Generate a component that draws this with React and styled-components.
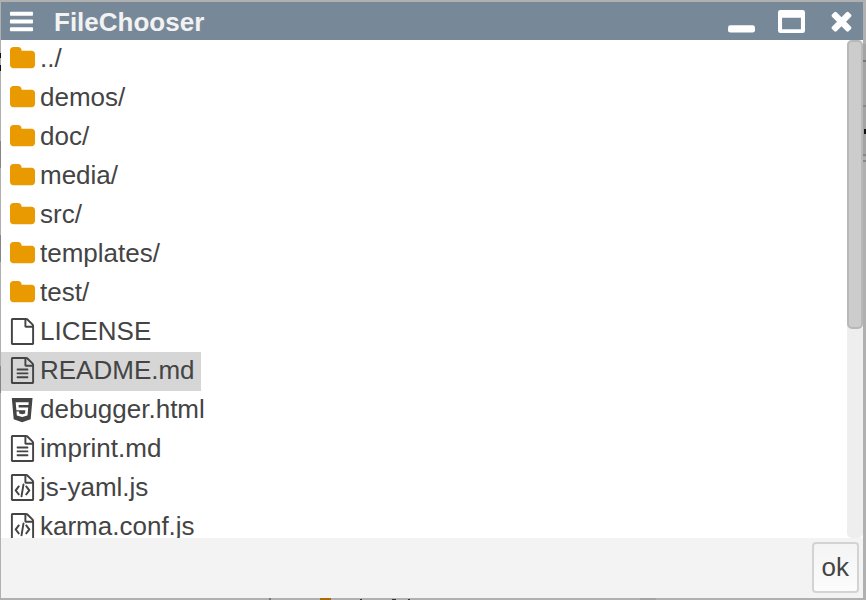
import React, { useState } from "react";
import styled, { createGlobalStyle } from "styled-components";

const GlobalStyle = createGlobalStyle`
  * { box-sizing: border-box; }
  html, body, #root { height: 100%; }
  body {
    margin: 0;
    overflow: hidden;
    background: #b0b0b0;
    color: #444;
    font-family: "Liberation Sans", Arial, Helvetica, sans-serif;
  }
  button { font-family: inherit; color: inherit; cursor: pointer; }
`;

const Desktop = styled.div`
  position: relative;
  height: 100vh;
  padding: 2px 3px 2px 1px;
`;

const Trace = styled.span`
  position: absolute;
  left: ${(p) => p.$left};
  top: ${(p) => p.$top};
  width: ${(p) => p.$w}px;
  height: ${(p) => p.$h}px;
  background: ${(p) => p.$color};
`;

const Window = styled.section`
  position: relative;
  display: flex;
  flex-direction: column;
  height: 100%;
  background: #fff;
`;

const TitleBar = styled.header`
  display: flex;
  align-items: center;
  flex: none;
  height: 38px;
  padding: 0 8px 0 7px;
  background: #789;
  color: #fff;
`;

const Title = styled.h1`
  flex: 1;
  margin: 0 0 0 19px;
  padding-top: 2px;
  color: #f2f2f2;
  font-size: 26px;
  line-height: 36px;
`;

const TitleButton = styled.button`
  display: flex;
  padding: 0;
  border: 0;
  background: none;
  color: inherit;
`;

const WindowControls = styled.div`
  display: flex;
  gap: 23px;
`;

const Glyph = styled.svg`
  display: block;
  flex: none;
  width: 27px;
  height: 27px;
  fill: currentColor;
`;

const Body = styled.div`
  display: flex;
  flex: 1;
  min-height: 0;
`;

const FileList = styled.ul`
  flex: 1;
  margin: 0;
  padding: 0;
  overflow-y: auto;
  list-style: none;
  scrollbar-width: none;
`;

const FileButton = styled.button`
  display: flex;
  align-items: center;
  gap: 4px;
  height: 39px;
  padding: 0 6px 2px 8px;
  border: 0;
  background: ${(p) => (p.$selected ? "#d6d6d6" : "transparent")};
  font-size: 26px;
  line-height: 37px;
  white-space: nowrap;
`;

const FileGlyph = styled(Glyph)`
  color: ${(p) => (p.$folder ? "#e99a00" : "#444")};
`;

const ScrollTrack = styled.div`
  flex: none;
  width: 16px;
  border-radius: 5px;
  background: #eee;
`;

const ScrollThumb = styled.div`
  height: 58%;
  border: 2px solid #b8b8b8;
  border-radius: 5px;
  background: #ccc;
`;

const Footer = styled.footer`
  display: flex;
  justify-content: flex-end;
  flex: none;
  padding: 4px 4px 5px;
  background: #f3f3f3;
`;

const OkButton = styled.button`
  height: 51px;
  padding: 0 8px;
  border: 2px solid #d3d3d3;
  border-radius: 4px;
  background: linear-gradient(#f4f4f4, #fcfcfc);
  font-size: 26px;
`;

const sheet =
  "M1596 380q28 28 48 76t20 88v1152q0 40-28 68t-68 28h-1344q-40 0-68-28t-28-68v-1600q0-40 28-68t68-28h896q40 0 88 20t76 48zM1152 136v376h376q-10-29-22-41l-313-313q-12-12-41-22zM1536 1664v-1024h-416q-40 0-68-28t-28-68v-416h-768v1536h1280z";

const paths = {
  folder:
    "M1728 608v704q0 92-66 158t-158 66h-1216q-92 0-158-66t-66-158v-960q0-92 66-158t158-66h320q92 0 158 66t66 158v32h672q92 0 158 66t66 158z",
  file: sheet,
  text:
    sheet +
    "M512 800q0-14 9-23t23-9h704q14 0 23 9t9 23v64q0 14-9 23t-23 9h-704q-14 0-23-9t-9-23zM1248 1024q14 0 23 9t9 23v64q0 14-9 23t-23 9h-704q-14 0-23-9t-9-23v-64q0-14 9-23t23-9zM1248 1280q14 0 23 9t9 23v64q0 14-9 23t-23 9h-704q-14 0-23-9t-9-23v-64q0-14 9-23t23-9z",
  code:
    sheet +
    "M608 768q8-11 21-12.5t24 6.5l51 38q11 8 12.5 21t-6.5 24l-182 243 182 243q8 11 6.5 24t-12.5 21l-51 38q-11 8-24 6.5t-21-12.5l-226-301q-14-19 0-38zM1410 1069q14 19 0 38l-226 301q-8 11-21 12.5t-24-6.5l-51-38q-11-8-12.5-21t6.5-24l182-243-182-243q-8-11-6.5-24t12.5-21l51-38q11-8 24-6.5t21 12.5zM790 1530q-13-2-20.5-13t-5.5-24l138-831q2-13 13-20.5t24-5.5l63 10q13 2 20.5 13t5.5 24l-138 831q-2 13-13 20.5t-24 5.5z",
  bars:
    "M192 256h1408q64 0 64 64v128q0 64-64 64h-1408q-64 0-64-64v-128q0-64 64-64zM192 768h1408q64 0 64 64v128q0 64-64 64h-1408q-64 0-64-64v-128q0-64 64-64zM192 1280h1408q64 0 64 64v128q0 64-64 64h-1408q-64 0-64-64v-128q0-64 64-64z",
  close:
    "M1490 1322q0 40-28 68l-136 136q-28 28-68 28t-68-28l-294-294-294 294q-28 28-68 28t-68-28l-136-136q-28-28-28-68t28-68l294-294-294-294q-28-28-28-68t28-68l136-136q28-28 68-28t68 28l294 294 294-294q28-28 68-28t68 28l136 136q28 28 28 68t-28 68l-294 294 294 294q28 28 28 68z",
  minimize:
    "M160 1152h1472q160 0 160 160v160q0 160-160 160h-1472q-160 0-160-160v-160q0-160 160-160z",
  maximize:
    "M160 128h1472q160 0 160 160v1216q0 160-160 160h-1472q-160 0-160-160v-1216q0-160 160-160zM270 640v768h1252v-768z",
  html:
    "M0 32l34.9 395.8L191.5 480l157.6-52.2L384 32H0zm308.2 127.9H124.4l4.1 49.4h175.6l-13.6 148.4-97.9 27v.3h-1.1l-98.7-27.3-6-75.8h47.7L138 320l53.5 14.5 53.7-14.5 6-62.2H84.3L71.5 112.2h241.1l-4.4 47.7z",
};

const viewBoxes = {
  html: "-52 -5 500 500",
  close: "90 140 1612 1612",
};
const viewBoxOf = (name) => viewBoxes[name] || "0 0 1792 1792";

const files = [
  ["../", "folder"],
  ["demos/", "folder"],
  ["doc/", "folder"],
  ["media/", "folder"],
  ["src/", "folder"],
  ["templates/", "folder"],
  ["test/", "folder"],
  ["LICENSE", "file"],
  ["README.md", "text"],
  ["debugger.html", "html"],
  ["imprint.md", "text"],
  ["js-yaml.js", "code"],
  ["karma.conf.js", "code"],
];

// Edges of the page that lies behind the window: [left, top, width, height, colour]
const traces = [
  ["0", "53px", 1, 5, "#111"],
  ["0", "65px", 1, 6, "#111"],
  ["0", "141px", 1, 27, "#858585"],
  ["0", "235px", 1, 27, "#858585"],
  ["0", "366px", 1, 27, "#858585"],
  ["calc(100% - 3px)", "44px", 3, 113, "#a4a4a4"],
  ["calc(100% - 3px)", "60px", 3, 2, "#777"],
  ["calc(100% - 3px)", "105px", 3, 2, "#888"],
  ["calc(100% - 2px)", "129px", 2, 5, "#111"],
  ["calc(100% - 3px)", "154px", 3, 2, "#888"],
  ["calc(100% - 3px)", "160px", 3, 2, "#888"],
  ["269px", "calc(100% - 2px)", 2, 2, "#777"],
  ["320px", "calc(100% - 2px)", 11, 2, "#a86c00"],
  ["360px", "calc(100% - 1px)", 2, 1, "#333"],
  ["392px", "calc(100% - 1px)", 4, 1, "#333"],
  ["408px", "calc(100% - 1px)", 2, 1, "#333"],
  ["640px", "calc(100% - 2px)", 16, 2, "#a4a4a4"],
];

function Icon({ name }) {
  return (
    <Glyph viewBox={viewBoxOf(name)} fillRule="evenodd" aria-hidden="true">
      <path d={paths[name]} />
    </Glyph>
  );
}

function FileIcon({ kind }) {
  return (
    <FileGlyph $folder={kind === "folder"} viewBox={viewBoxOf(kind)} aria-hidden="true">
      <path d={paths[kind]} />
    </FileGlyph>
  );
}

export default function App() {
  const [selected, setSelected] = useState("README.md");
  return (
    <>
      <GlobalStyle />
      <Desktop>
        {traces.map(([left, top, w, h, color]) => (
          <Trace key={left + top} $left={left} $top={top} $w={w} $h={h} $color={color} />
        ))}
        <Window aria-label="FileChooser">
          <TitleBar>
            <TitleButton aria-label="Menu"><Icon name="bars" /></TitleButton>
            <Title>FileChooser</Title>
            <WindowControls>
              <TitleButton aria-label="Minimize"><Icon name="minimize" /></TitleButton>
              <TitleButton aria-label="Maximize"><Icon name="maximize" /></TitleButton>
              <TitleButton aria-label="Close"><Icon name="close" /></TitleButton>
            </WindowControls>
          </TitleBar>
          <Body>
            <FileList>
              {files.map(([name, kind]) => (
                <li key={name}>
                  <FileButton
                    $selected={name === selected}
                    aria-pressed={name === selected}
                    onClick={() => setSelected(name)}
                  >
                    <FileIcon kind={kind} />
                    {name}
                  </FileButton>
                </li>
              ))}
            </FileList>
            <ScrollTrack aria-hidden="true"><ScrollThumb /></ScrollTrack>
          </Body>
          <Footer><OkButton>ok</OkButton></Footer>
        </Window>
      </Desktop>
    </>
  );
}
